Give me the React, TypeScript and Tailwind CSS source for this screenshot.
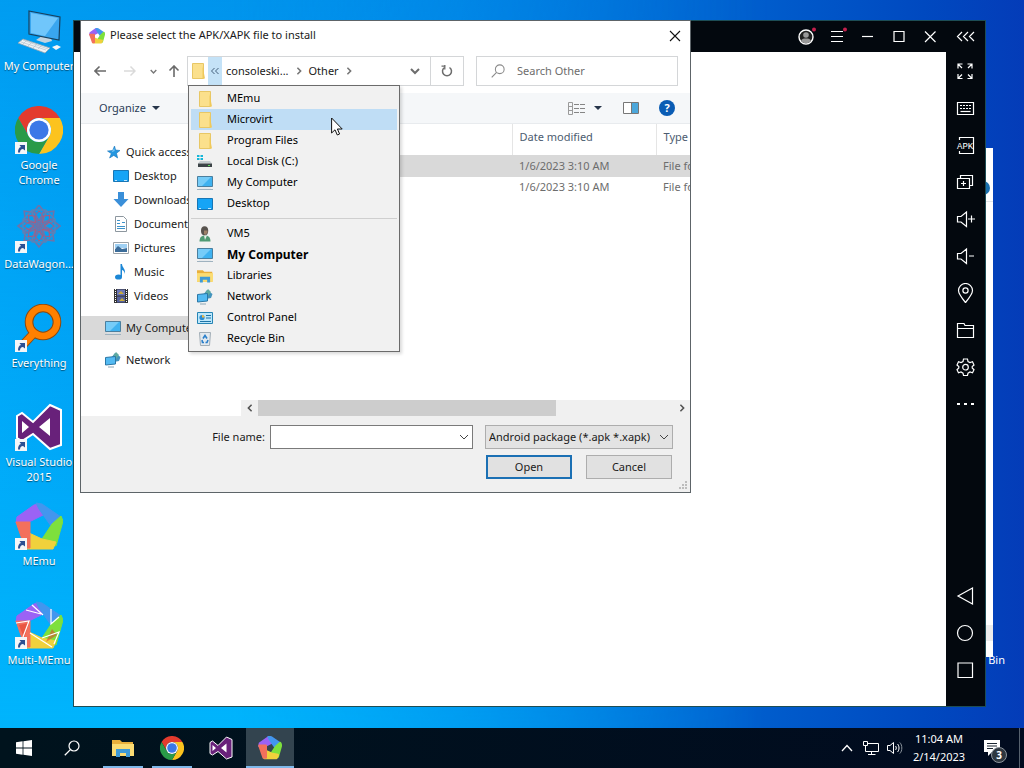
import type { ReactNode } from 'react';

/* ---------- icons ---------- */

const svgProps = { fill: 'none', xmlns: 'http://www.w3.org/2000/svg', 'aria-hidden': true } as const;

const memuBlades = [
  { d: 'M1 21 2 15 19 3 24 2 28 13 14 20Z', color: '#9b62f5' },
  { d: 'M21 1 27 2 46 15 36 24 24 7Z', color: '#4396ee' },
  { d: 'M46 14 48 19 41 44 27 37 37 22Z', color: '#7ee03c' },
  { d: 'M14 31 27 37 41 40 38 47 12 47Z', color: '#f0d13c' },
  { d: 'M1 20 15 20 15 46 10 46Z', color: '#f3705c' },
];

function MemuIcon({ className, multi = false, small = false }: { className: string; multi?: boolean; small?: boolean }) {
  return (
    <svg {...svgProps} viewBox={small ? '-2 -1 52 52' : '0 0 48 48'} className={className}>
      {memuBlades.map((b) => (
        <path key={b.color} d={b.d} fill={b.color} stroke={b.color} strokeWidth={small ? 5 : 1} strokeLinejoin="round" />
      ))}
      {multi && (
        <>
          <path d="M4 24 14 22 9 37ZM31 41 42 34 37 28Z" fill="#e0422c" fillOpacity=".55" />
          <path d="M17 4 28 14M11 9l15 4M36 8v15l8-7M1 22l13-2-6 16M15 32l22 14M27 37l17-6-5 12" stroke="#fff" strokeWidth="1.2" />
        </>
      )}
    </svg>
  );
}

function ChromeIcon({ className }: { className: string }) {
  return (
    <svg {...svgProps} viewBox="0 0 48 48" className={className}>
      <path d="M24 12H44.8A24 24 0 0 0 3.2 12L13.6 30A12 12 0 0 1 24 12Z" fill="#e33b2e" />
      <path d="M44.8 12H24A12 12 0 0 1 34.4 30L24 48A24 24 0 0 0 44.8 12Z" fill="#fcc31e" />
      <path d="M3.2 12 13.6 30A12 12 0 0 0 34.4 30L24 48A24 24 0 0 1 3.2 12Z" fill="#2a9a48" />
      <circle cx="24" cy="24" r="12" fill="#fff" />
      <circle cx="24" cy="24" r="9.6" fill="#3b78e7" />
    </svg>
  );
}

function VisualStudioIcon({ className }: { className: string }) {
  return (
    <svg {...svgProps} viewBox="0 0 48 48" className={className}>
      <path d="M35 2 46 7V42L35 46 18 31 7 38 2 35V13L7 10 18 19Z" fill="#68217a" stroke="#fff" strokeWidth="2" />
      <path d="M35 15 24 24 35 33ZM7 18V30L14 24Z" fill="#fff" />
    </svg>
  );
}

function EverythingIcon({ className }: { className: string }) {
  return (
    <svg {...svgProps} viewBox="0 0 48 48" className={className}>
      <path d="M19 29 6 43" stroke="#8a4a12" strokeWidth="9" />
      <circle cx="28" cy="18" r="14" stroke="#8a4a12" strokeWidth="8.6" />
      <circle cx="28" cy="18" r="14" stroke="#ff8000" strokeWidth="6.6" />
      <path d="M20 28 6 43" stroke="#ff8000" strokeWidth="7" />
    </svg>
  );
}

function DataWagonIcon({ className }: { className: string }) {
  return (
    <svg {...svgProps} viewBox="0 0 48 48" className={className}>
      {[0, 45, 90, 135, 180, 225, 270, 315].map((angle) => (
        <g key={angle} transform={`rotate(${angle} 24 21)`}>
          <path d="M24 21 17 9 24 0 31 9Z" stroke="#6f73a8" strokeWidth="1.6" />
          <path d="M24 15 18 5H30Z" stroke="#5a83b8" strokeWidth="1.4" />
          <path d="M24 16 20 11 24 6 28 11Z" stroke="#b0587c" strokeWidth="1" />
        </g>
      ))}
    </svg>
  );
}

function DesktopComputerIcon({ className }: { className: string }) {
  return (
    <svg {...svgProps} viewBox="0 0 48 48" className={className}>
      <path d="M27 29 36 31 37 34 30 36 21 33Z" fill="#c3d3df" />
      <path d="M14 4 45 10 44 33 14 27Z" fill="#39a6ef" stroke="#17415f" strokeWidth="1.2" />
      <path d="M16 6 43 11 30 29 16 26Z" fill="#70c6fb" />
      <path d="M3 36 8 32 35 41 30 46Z" fill="#edf2f5" stroke="#90a4b3" strokeWidth=".8" />
      <path d="M6 35 31 43M8 33l25 9M12 33l-4 4M17 35l-4 4M22 37l-4 4M27 38l-4 4" stroke="#adbcc7" strokeWidth=".6" />
      <path d="M37 40 42 38 46 40 41 43Z" fill="#f3f6f8" />
    </svg>
  );
}

function WindowsIcon() {
  return (
    <svg {...svgProps} viewBox="0 0 16 16" className="size-4">
      <path d="M0 2.2 6.6 1.3V7.6H0ZM7.4 1.2 16 0V7.6H7.4ZM0 8.4H6.6V14.7L0 13.8ZM7.4 8.4H16V16L7.4 14.8Z" fill="#fff" />
    </svg>
  );
}

function SearchIcon({ className }: { className: string }) {
  return (
    <svg {...svgProps} viewBox="0 0 16 16" className={className}>
      <circle cx="10" cy="6" r="5" stroke="currentColor" strokeWidth="1.2" />
      <path d="M6.4 9.6.8 15.2" stroke="currentColor" strokeWidth="1.3" />
    </svg>
  );
}

function LibrariesIcon({ className }: { className: string }) {
  return (
    <svg {...svgProps} viewBox="0 0 22 18" className={className}>
      <path d="M0 1H8L10 3H21V17H0Z" fill="#e9b03c" />
      <path d="M0 5H22V17H0Z" fill="#fbdc73" />
      <path d="M4 18V10H18V18H14V14H8V18Z" fill="#3f9ad6" />
    </svg>
  );
}

function Icon16({ children }: { children: ReactNode }) {
  return <svg {...svgProps} viewBox="0 0 16 16" className="size-4 shrink-0">{children}</svg>;
}

const FolderIcon = () => (
  <Icon16>
    <path d="M2.5.5H13.500V15.500H2.500Z" fill="#fbe08c" stroke="#e8c765" />
    <path d="M13.500 8 15 15.500H12.500V3Z" fill="#f0c95a" />
  </Icon16>
);

const MonitorIcon = () => (
  <Icon16>
    <path d="M.5 1.5H15.5V11.5H.5Z" fill="#3fb2f0" stroke="#4b7f9e" />
    <path d="M1 2H14L5 11H1Z" fill="#76ccf8" />
    <path d="M0 14.5H16" stroke="#9fb2bf" />
    <path d="M2 13H14" stroke="#dbe4ea" />
  </Icon16>
);

const DesktopIcon = () => (
  <Icon16>
    <path d="M.5 2.5H15.5V13.5H.5Z" fill="#16a4f6" stroke="#1876b5" />
    <path d="M2 12.5H4M11 12.5H14" stroke="#bde5ff" />
  </Icon16>
);

const NetworkIcon = () => (
  <Icon16>
    <path d="M10 1 15.500 5 14 9 9 10 6 6Z" fill="#4394bd" />
    <path d="M11 0 14 3 11 7 8 4Z" fill="#5fa9a0" />
    <path d="M.5 5.500 10.500 4.500V12L.5 13Z" fill="#53baf2" stroke="#2b77a6" />
    <path d="M3 15H9" stroke="#8ba6b6" />
  </Icon16>
);

const StarIcon = () => (
  <Icon16>
    <path d="M9.500 2 10.600 6 15 6.500 11.500 9.200 12.600 14 8.800 11.400 4.600 14 6.300 9.600 2.500 7 7.600 6.500Z" fill="#2497e0" stroke="#1876bd" strokeWidth=".6" />
    <path d="M9.300 4 9.700 7 6.500 8.300Z" fill="#77c5f5" />
  </Icon16>
);

const DownloadIcon = () => (
  <Icon16><path d="M5 0H11V7H15.500L8 15 .5 7H5Z" fill="#3a8fd9" /></Icon16>
);

const DocumentIcon = () => (
  <Icon16>
    <path d="M2.5.5H10.5L13.5 3.5V15.5H2.5Z" fill="#fff" stroke="#8d979f" />
    <path d="M4 4.5H7M4 7.5H7M9 6.5H12M4 10.5H12M4 12.5H12" stroke="#3f93ca" />
  </Icon16>
);

const PictureIcon = () => (
  <Icon16>
    <path d="M.5 2.5H15.5V13.5H.5Z" fill="#fff" stroke="#9ba3a9" />
    <path d="M2 4H14V8H2Z" fill="#9fd0f3" />
    <path d="M2 9 5 6 9 9 14 8V12H2Z" fill="#3b6c99" />
  </Icon16>
);

const MusicIcon = () => (
  <Icon16>
    <ellipse cx="5.5" cy="13" rx="3.5" ry="2.6" fill="#1c87d6" />
    <path d="M7.5 13V0H9C9 4 13.5 5 11.5 10 11.5 7 10 6 9 6V13Z" fill="#1c87d6" />
  </Icon16>
);

const VideoIcon = () => (
  <Icon16>
    <path d="M1 1H15V15H1Z" fill="#333" />
    <path d="M4 1.5H12V7.5H4Z" fill="#6a76b8" />
    <path d="M4 8.5H12V14.5H4Z" fill="#55619c" />
    <path d="M5 6 8 3 11 6ZM6 13 9 10 12 13Z" fill="#c8ab3c" />
    <path d="M2.5 1V15M13.5 1V15" stroke="#fff" strokeDasharray="1 1" />
  </Icon16>
);

const DiskIcon = () => (
  <Icon16>
    <path d="M0 1H2.5V3H0ZM3.5 1H6V3H3.5ZM0 4H2.5V6H0ZM3.5 4H6V6H3.5Z" fill="#16b6d8" />
    <path d="M3 7H13L15 9.5H1Z" fill="#c5cccf" />
    <path d="M1 9.5H15V13H1Z" fill="#3c4347" />
    <path d="M11 11.5H13" stroke="#5be05b" />
  </Icon16>
);

const UserIcon = () => (
  <Icon16>
    <path d="M2.500 15.500C2.500 11 5 9.500 8 9.500S13.500 11 13.500 15.500Z" fill="#4f9a73" />
    <path d="M7 9.5 8 14 10 9.5Z" fill="#e9efe9" />
    <ellipse cx="7.6" cy="4.8" rx="3.600" ry="4.500" fill="#58534e" />
    <path d="M7 4.5H10.5V6.5L8.5 9 7 8Z" fill="#9c8068" />
  </Icon16>
);

const ControlPanelIcon = () => (
  <Icon16>
    <path d="M.5 2.5H15.5V13.5H.5Z" fill="#bce7fb" stroke="#2685b5" />
    <circle cx="5" cy="7.5" r="2.6" fill="#2a8cd2" />
    <path d="M5 7.5V4.9A2.6 2.6 0 0 1 7.6 7.5Z" fill="#f4b942" />
    <path d="M9 5.5H14M9 8H14M3 11.5H14" stroke="#1e73a6" />
  </Icon16>
);

const RecycleIcon = () => (
  <Icon16>
    <path d="M2.5 1.5H13.5L12.5 14.5H3.5Z" fill="#e3e9ee" stroke="#a1adb6" />
    <path d="M6 7.500 8 4.500 10 7.500M11 9 10 11.500H8.500M7 11.500H5.500L5 9" stroke="#2a7fca" strokeWidth="1.6" />
  </Icon16>
);

function Chevron({ className }: { className: string }) {
  return (
    <svg {...svgProps} viewBox="0 0 10 10" className={className}>
      <path d="M1 3 5 7 9 3" stroke="currentColor" />
    </svg>
  );
}

function BoldChevron({ className }: { className: string }) {
  return (
    <svg {...svgProps} viewBox="0 0 10 10" className={className}>
      <path d="M1 3 5 7 9 3" stroke="currentColor" strokeWidth="2" />
    </svg>
  );
}

function Stroke({ children }: { children: ReactNode }) {
  return (
    <svg {...svgProps} viewBox="0 0 20 20" className="size-5" stroke="#fff" strokeWidth="1.2">
      {children}
    </svg>
  );
}

/* ---------- desktop ---------- */

const shortcuts = [
  { label: 'My Computer', icon: <DesktopComputerIcon className="size-12" />, arrow: false },
  { label: 'Google Chrome', icon: <ChromeIcon className="size-12" />, arrow: true },
  { label: 'DataWagon...', icon: <DataWagonIcon className="size-12" />, arrow: true },
  { label: 'Everything', icon: <EverythingIcon className="size-12" />, arrow: true },
  { label: 'Visual Studio 2015', icon: <VisualStudioIcon className="size-12" />, arrow: true },
  { label: 'MEmu', icon: <MemuIcon className="size-12" />, arrow: true },
  { label: 'Multi-MEmu', icon: <MemuIcon className="size-12" multi />, arrow: true },
];

function DesktopShortcuts() {
  return (
    <div className="flex w-[78px] flex-col pt-[7px]">
      {shortcuts.map((s) => (
        <button key={s.label} className="flex h-[99px] flex-col items-center gap-[3px] text-white">
          <span className="relative">
            {s.icon}
            {s.arrow && (
              <svg {...svgProps} viewBox="0 0 12 12" className="absolute bottom-0 left-0 size-3">
                <path d="M0 0H12V12H0Z" fill="#f4f6f8" />
                <path d="M3 10.5C3 7 4 5.5 6 5L4.5 3H10V8.5L8 7C6 7 5 8.5 5 10.5Z" fill="#2c4f92" />
              </svg>
            )}
          </span>
          <span className="leading-[15px] [text-shadow:0_1px_1px_rgba(0,0,0,0.5)]">{s.label}</span>
        </button>
      ))}
    </div>
  );
}

/* ---------- emulator window ---------- */

const titleButtons = [
  {
    name: 'Account',
    icon: (
      <>
        <circle cx="10" cy="10" r="7" fill="#222" strokeWidth="1.4" />
        <circle cx="10" cy="8" r="2.8" fill="#999" stroke="none" />
        <path d="M5 14C6 11.5 8 11.5 10 11.5S14 11.5 15 14A6.4 6.4 0 0 1 5 14Z" fill="#999" stroke="none" />
        <circle cx="18" cy="2.5" r="2" fill="#c4204c" stroke="none" />
      </>
    ),
  },
  {
    name: 'Menu',
    icon: (
      <>
        <path d="M4 4.5H16M4 9.5H16M4 14.5H16" />
        <circle cx="18" cy="2.5" r="2" fill="#c4204c" stroke="none" />
      </>
    ),
  },
  { name: 'Minimize', icon: <path d="M4 9.5H15" /> },
  { name: 'Maximize', icon: <path d="M5 4.5H15V14.5H5Z" /> },
  { name: 'Close', icon: <path d="M5 4.5 15.5 15M15.5 4.5 5 15" /> },
];

const sideTools = [
  { name: 'Full screen', icon: <path d="M3 7.5V3H7.5M3 3 7 7M12.5 3H17V7.5M17 3 13 7M3 13V17.5H7.5M3 17.5 7 13.5M17 13V17.5H12.5M17 17.5 13 13.5" /> },
  {
    name: 'Key mapping',
    icon: (
      <>
        <path d="M2.5 4.5H18.5V16.5H2.5Z" />
        <path d="M5 7.5H16.5M5 10.5H16.5" strokeDasharray="2 1" />
        <path d="M5.5 13.5H15.5" />
      </>
    ),
  },
  {
    name: 'Install APK',
    icon: (
      <>
        <path d="M4.5 5V2.5H18.5V18.5H4.5V16" />
        <text x="2" y="14" fill="#fff" stroke="none" className="font-['Liberation_Mono',monospace] text-[9px]">APK</text>
      </>
    ),
  },
  { name: 'Multi-instance', icon: <path d="M5.5 6V3.5H17.5V13.5H15M2.5 6.5H14.5V16.5H2.5ZM8.5 9V14M6 11.5H11" /> },
  { name: 'Volume up', icon: <path d="M2.5 7.5H6L11.5 3V17.5L6 13H2.5ZM13 10H20M16.5 6.5V13.5" /> },
  { name: 'Volume down', icon: <path d="M2.5 7.5H6L11.5 3V17.5L6 13H2.5ZM14 10H19" /> },
  {
    name: 'Location',
    icon: (
      <>
        <path d="M10.5 19.5C6 14 3.5 11 3.5 7.5A7 7 0 0 1 17.5 7.5C17.5 11 15 14 10.5 19.5Z" />
        <circle cx="10.5" cy="7.5" r="2.6" />
      </>
    ),
  },
  { name: 'Shared folder', icon: <path d="M2.5 17.5V3.5H9L10 5.5H18.5V17.5ZM2.5 8.5H18.5" /> },
  {
    name: 'Settings',
    icon: (
      <>
        <path d="M8.5 2H12.5L13 4.5 15 5.5 17.5 4.7 19 8 17.2 9.5V11L19 12.7 17.5 15.8 15 15 13 16.2 12.5 18.5H8.5L8 16.2 6 15 3.5 15.8 2 12.7 3.8 11V9.5L2 8 3.5 4.7 6 5.5 8 4.5Z" />
        <circle cx="10.5" cy="10.2" r="2.8" />
      </>
    ),
  },
  { name: 'More', icon: <path d="M2 10H5M9 10H12M16 10H19" strokeWidth="2" /> },
];

const navTools = [
  { name: 'Back', icon: <path d="M3 10 17.5 2V18Z" /> },
  { name: 'Home', icon: <circle cx="10" cy="10" r="7.5" /> },
  { name: 'Recents', icon: <path d="M3 3H17.5V17.5H3Z" /> },
];

function EmulatorWindow() {
  return (
    <section className="absolute top-5 right-[38px] bottom-[21px] left-[73px] flex border border-[#1d4d55] bg-white">
      <div className="flex flex-1 flex-col">
        <header className="flex h-[31px] justify-end bg-[#03080e] pr-px">
          {titleButtons.map((b) => (
            <button key={b.name} aria-label={b.name} className="flex w-[31px] items-center justify-center">
              <Stroke>{b.icon}</Stroke>
            </button>
          ))}
        </header>
      </div>
      <aside className="flex w-[39px] flex-col bg-[#03080e] pr-[2px]">
        <button aria-label="Collapse" className="flex h-[31px] items-center justify-center">
          <Stroke><path d="M7 5 2.5 9.5 7 14M13 5 8.5 9.5 13 14M19 5 14.5 9.5 19 14" /></Stroke>
        </button>
        {sideTools.map((t) => (
          <button key={t.name} aria-label={t.name} className="flex h-[37px] items-center justify-center">
            <Stroke>{t.icon}</Stroke>
          </button>
        ))}
        <div className="mt-auto flex flex-col pb-[18px]">
          {navTools.map((t) => (
            <button key={t.name} aria-label={t.name} className="flex h-[37px] items-center justify-center">
              <Stroke>{t.icon}</Stroke>
            </button>
          ))}
        </div>
      </aside>
    </section>
  );
}

/* ---------- file dialog ---------- */

type MenuEntry = { label: string; icon: ReactNode; active?: boolean; bold?: boolean };

const menuTop: MenuEntry[] = [
  { label: 'MEmu', icon: <FolderIcon /> },
  { label: 'Microvirt', icon: <FolderIcon />, active: true },
  { label: 'Program Files', icon: <FolderIcon /> },
  { label: 'Local Disk (C:)', icon: <DiskIcon /> },
  { label: 'My Computer', icon: <MonitorIcon /> },
  { label: 'Desktop', icon: <DesktopIcon /> },
];

const menuBottom: MenuEntry[] = [
  { label: 'VM5', icon: <UserIcon /> },
  { label: 'My Computer', icon: <MonitorIcon />, bold: true },
  { label: 'Libraries', icon: <LibrariesIcon className="h-[14px] w-4 shrink-0" /> },
  { label: 'Network', icon: <NetworkIcon /> },
  { label: 'Control Panel', icon: <ControlPanelIcon /> },
  { label: 'Recycle Bin', icon: <RecycleIcon /> },
];

function MenuRow({ item }: { item: MenuEntry }) {
  return (
    <button
      role="menuitem"
      className={`relative flex h-[21px] w-full items-center gap-[14px] pl-[6px] text-left text-black ${item.active ? 'bg-[#bfddf5]' : ''} ${item.bold ? 'text-[12px] font-bold' : ''}`}
    >
      {item.icon}
      <span>{item.label}</span>
      {item.active && (
        <svg {...svgProps} viewBox="0 0 12 19" className="absolute top-2 left-[140px] h-[19px] w-3">
          <path d="M.6 1V16L4 12.8 6.3 18 8.6 17 6.4 12H11.2Z" fill="#fff" stroke="#111" />
        </svg>
      )}
    </button>
  );
}

function BreadcrumbMenu() {
  return (
    <div role="menu" className="absolute top-7 left-0 z-10 w-[212px] border border-[#6b6b6b] bg-[#f1f1f1] p-[2px] shadow-[2px_2px_3px_rgba(0,0,0,0.15)]">
      {menuTop.map((item) => <MenuRow key={item.label} item={item} />)}
      <div className="flex h-[9px] items-center"><hr className="w-full border-[#cfcfcf]" /></div>
      {menuBottom.map((item) => <MenuRow key={item.label} item={item} />)}
    </div>
  );
}

const quickAccess = [
  { label: 'Desktop', icon: <DesktopIcon /> },
  { label: 'Downloads', icon: <DownloadIcon /> },
  { label: 'Documents', icon: <DocumentIcon /> },
  { label: 'Pictures', icon: <PictureIcon /> },
  { label: 'Music', icon: <MusicIcon /> },
  { label: 'Videos', icon: <VideoIcon /> },
];

function AddressBar() {
  return (
    <div className="flex h-[30px] pr-3">
      <div className="flex w-[106px] items-center pl-1">
        <button aria-label="Back" className="flex w-[30px] justify-center text-[#6a6a6a]">
          <svg {...svgProps} viewBox="0 0 12 12" className="size-3"><path d="M12 6H1M5.5 1.5 1 6l4.5 4.5" stroke="currentColor" strokeWidth="1.6" /></svg>
        </button>
        <button aria-label="Forward" className="flex w-[29px] justify-center text-[#dadada]">
          <svg {...svgProps} viewBox="0 0 12 12" className="size-3"><path d="M0 6H11M6.5 1.5 11 6l-4.5 4.5" stroke="currentColor" strokeWidth="1.5" /></svg>
        </button>
        <button aria-label="Recent locations" className="flex w-[18px] justify-center text-[#777]"><BoldChevron className="size-[7px]" /></button>
        <button aria-label="Up" className="flex w-6 justify-center text-[#6a6a6a]">
          <svg {...svgProps} viewBox="0 0 12 12" className="size-3"><path d="M6 12V1M1.5 5.5 6 1l4.5 4.5" stroke="currentColor" strokeWidth="1.6" /></svg>
        </button>
      </div>
      <div className="relative flex flex-1 items-center border border-[#d4d6d8]">
        <span className="flex w-5 justify-center"><FolderIcon /></span>
        <button aria-label="Show path" className="h-full w-[14px] bg-[#c4e2f7] text-[#44607c]">
          <svg {...svgProps} viewBox="0 0 10 8" className="mx-auto h-2 w-[10px]"><path d="M4.5 1 1.5 4 4.5 7M8.5 1 5.5 4 8.5 7" stroke="currentColor" /></svg>
        </button>
        <button className="pl-1">consoleski...</button>
        <span className="px-[6px] text-[#777]"><BoldChevron className="size-2 -rotate-90" /></span>
        <button>Other</button>
        <span className="px-[6px] text-[#777]"><BoldChevron className="size-2 -rotate-90" /></span>
        <button aria-label="Previous locations" className="ml-auto flex h-full w-[31px] items-center justify-center text-[#6d6d6d]"><BoldChevron className="size-[10px]" /></button>
        <button aria-label="Refresh" className="flex h-full w-[33px] items-center justify-center border-l border-[#d4d6d8] text-[#6d6d6d]">
          <svg {...svgProps} viewBox="0 0 12 12" className="size-3">
            <path d="M3.5 2.5A4.5 4.5 0 1 0 8.5 2.5" stroke="currentColor" strokeWidth="1.5" />
            <path d="M3.8 0V4.5M.5 1.2H4.5" stroke="currentColor" strokeWidth="1.3" />
          </svg>
        </button>
        <BreadcrumbMenu />
      </div>
      <label className="ml-3 flex w-[202px] items-center gap-3 border border-[#d4d6d8] pl-[14px] text-[#8a8a8a]">
        <SearchIcon className="size-[14px] shrink-0" />
        <input aria-label="Search Other" placeholder="Search Other" className="w-full min-w-0 bg-transparent outline-none placeholder:text-[#6d6d6d]" />
      </label>
    </div>
  );
}

function Toolbar() {
  return (
    <div className="mt-[7px] flex h-[31px] items-center border-b border-[#e8ebee] bg-[#f5f7f9] pr-[15px] pl-[18px] text-[#2b3c56]">
      <button className="flex items-center gap-[6px]">
        Organize
        <svg {...svgProps} viewBox="0 0 8 4" className="h-1 w-2"><path d="M0 0H8L4 4Z" fill="#26354a" /></svg>
      </button>
      <div className="ml-auto flex items-center">
        <button aria-label="Change your view" className="flex items-center gap-[9px]">
          <svg {...svgProps} viewBox="0 0 17 13" className="h-[13px] w-[17px]">
            <path d="M.5.5H4.5V12.5H.5ZM.5 4.5H4.5M.5 8.5H4.5" stroke="#9a9a9a" />
            <path d="M6 2.5H17M6 6.5H17M6 10.5H17" stroke="#858585" strokeDasharray="5 1" />
          </svg>
          <svg {...svgProps} viewBox="0 0 8 4" className="h-1 w-2"><path d="M0 0H8L4 4Z" fill="#26354a" /></svg>
        </button>
        <button aria-label="Preview pane" className="ml-[21px]">
          <svg {...svgProps} viewBox="0 0 16 12" className="h-3 w-4">
            <path d="M.5.5H15.5V11.5H.5Z" fill="#fff" stroke="#777" />
            <path d="M9 1H15V11H9Z" fill="#4ca7db" />
            <path d="M8.5 1V11" stroke="#777" />
          </svg>
        </button>
        <button aria-label="Help" className="ml-5 flex size-4 items-center justify-center rounded-full bg-[#0a5cb4] font-bold text-white">?</button>
      </div>
    </div>
  );
}

function FilePane() {
  return (
    <div className="ml-1 flex min-w-0 flex-1 flex-col overflow-hidden">
      <table className="w-full table-fixed text-left text-[#6d6d6d]">
        <thead>
          <tr className="h-[31px] text-[#4c5c70]">
            <th aria-label="Name" className="w-[271px] border-r border-[#e5e5e5]" />
            <th className="w-36 border-r border-[#e5e5e5] pb-1 pl-[7px] font-normal">Date modified</th>
            <th className="pb-1 pl-[7px] font-normal">Type</th>
          </tr>
        </thead>
        <tbody>
          {[0, 1].map((row) => (
            <tr key={row} className={row === 0 ? 'h-[22px] bg-[#d9d9d9]' : 'h-[21px]'}>
              <td />
              <td className="pl-[7px]">1/6/2023 3:10 AM</td>
              <td className="overflow-hidden pl-[7px] whitespace-nowrap">File folder</td>
            </tr>
          ))}
        </tbody>
      </table>
      <div className="mt-auto flex h-4 items-center bg-[#f0f0f0] text-[#555]">
        <button aria-label="Scroll left" className="flex w-[17px] justify-center"><BoldChevron className="size-2 rotate-90" /></button>
        <div className="h-full w-[298px] bg-[#cdcdcd]" />
        <button aria-label="Scroll right" className="ml-auto flex w-[17px] justify-center"><BoldChevron className="size-2 -rotate-90" /></button>
      </div>
    </div>
  );
}

function FileDialog() {
  return (
    <section role="dialog" aria-label="Please select the APK/XAPK file to install" className="absolute top-5 left-20 w-[611px] border border-[#5d6468] bg-white text-[#1a1a1a]">
      <header className="flex h-[35px] items-center pb-[6px] pl-2">
        <MemuIcon className="size-4" small />
        <h1 className="ml-[5px]">Please select the APK/XAPK file to install</h1>
        <button aria-label="Close" className="mr-[9px] ml-auto">
          <svg {...svgProps} viewBox="0 0 12 12" className="size-3"><path d="M1 1 11 11M11 1 1 11" stroke="#111" strokeWidth="1.1" /></svg>
        </button>
      </header>
      <AddressBar />
      <Toolbar />
      <div className="flex h-[292px]">
        <nav className="flex w-[156px] flex-col pt-4">
          <a href="#quick" className="flex h-6 items-center gap-[5px] pl-6"><StarIcon />Quick access</a>
          {quickAccess.map((q) => (
            <a key={q.label} href="#folder" className="flex h-6 items-center gap-[5px] pl-8">{q.icon}{q.label}</a>
          ))}
          <a href="#computer" className="mt-2 flex h-6 items-center gap-[5px] bg-[#d9d9d9] pl-6"><MonitorIcon />My Computer</a>
          <a href="#network" className="mt-2 flex h-6 items-center gap-[5px] pl-6"><NetworkIcon />Network</a>
        </nav>
        <FilePane />
      </div>
      <footer className="relative flex flex-col gap-[6px] bg-[#f0f0f0] pt-[9px] pr-[17px] pb-[13px]">
        <div className="flex items-center">
          <label htmlFor="file-name" className="w-[184px] text-right">File name:</label>
          <div className="relative ml-[5px] flex-1">
            <input id="file-name" className="block h-6 w-full border border-[#7a7a7a] bg-white px-1 outline-none" />
            <Chevron className="pointer-events-none absolute top-[7px] right-1 size-[10px] text-[#444]" />
          </div>
          <div className="relative ml-3 w-[188px]">
            <select aria-label="File type" className="block h-6 w-full appearance-none border border-[#adadad] bg-[#e3e3e3] pl-[3px]">
              <option>Android package (*.apk *.xapk)</option>
            </select>
            <Chevron className="pointer-events-none absolute top-[7px] right-1 size-[10px] text-[#444]" />
          </div>
        </div>
        <div className="flex justify-end gap-[14px] pr-px">
          <button className="h-6 w-[86px] border-2 border-[#1b70b4] bg-[#e1e1e1]">Open</button>
          <button className="h-6 w-[86px] border border-[#adadad] bg-[#e1e1e1]">Cancel</button>
        </div>
        <svg {...svgProps} viewBox="0 0 9 9" className="absolute right-[2px] bottom-[2px] size-[9px]">
          <path d="M6 0H8V2H6ZM3 3H5V5H3ZM6 3H8V5H6ZM0 6H2V8H0ZM3 6H5V8H3ZM6 6H8V8H6Z" fill="#bdbdbd" />
        </svg>
      </footer>
    </section>
  );
}

/* ---------- taskbar ---------- */

const pinned = [
  { name: 'File Explorer', icon: <LibrariesIcon className="h-[18px] w-[22px]" />, line: 'w-10' },
  { name: 'Google Chrome', icon: <ChromeIcon className="size-6" />, line: 'w-10' },
  { name: 'Visual Studio', icon: <VisualStudioIcon className="size-6" />, line: '' },
  { name: 'MEmu', icon: <MemuIcon className="size-6" small />, line: 'w-12', active: true },
];

function Taskbar() {
  return (
    <footer className="flex h-10 bg-linear-to-r from-[#00131d] to-[#010b1f] text-white">
      <button aria-label="Start" className="flex w-12 items-center justify-center"><WindowsIcon /></button>
      <button aria-label="Search" className="flex w-12 items-center justify-center"><SearchIcon className="size-4" /></button>
      <div className="ml-[3px] flex gap-px">
        {pinned.map((p) => (
          <button key={p.name} aria-label={p.name} className={`relative flex w-12 items-center justify-center ${p.active ? 'bg-[#33444f]' : ''}`}>
            {p.icon}
            {p.line && <span className={`absolute bottom-0 h-[2px] bg-[#7fb8ea] ${p.line}`} />}
          </button>
        ))}
      </div>
      <div className="ml-auto flex items-center">
        <button aria-label="Show hidden icons" className="flex w-6 justify-center">
          <svg {...svgProps} viewBox="0 0 12 8" className="h-2 w-3"><path d="M1 7 6 1.5 11 7" stroke="#fff" strokeWidth="1.3" /></svg>
        </button>
        <button aria-label="Network" className="flex w-6 justify-center">
          <svg {...svgProps} viewBox="0 0 16 14" className="h-[14px] w-4">
            <path d="M5 2.5H15.5V10.5H2.5V6M8.5 10.5V13.5M5 13.5H12.5M.5.5H4.5V4.5H.5ZM2.5 4.5V7" stroke="#fff" />
          </svg>
        </button>
        <button aria-label="Volume" className="flex w-6 justify-center">
          <svg {...svgProps} viewBox="0 0 16 14" className="h-[14px] w-4" stroke="#fff">
            <path d="M.5 4.5H3L6.5 1.5V12.5L3 9.5H.5ZM8.5 5C9.5 6 9.5 8 8.5 9M10.5 3C12.5 5 12.5 9 10.5 11" />
            <path d="M12.8 1.5C15.5 4 15.5 10 12.8 12.5" stroke="#8c949c" />
          </svg>
        </button>
        <button className="flex w-16 flex-col items-center text-center leading-[18px]">
          <span>11:04 AM</span>
          <span>2/14/2023</span>
        </button>
        <button aria-label="Notifications" className="relative flex h-10 w-[42px] items-center justify-center">
          <svg {...svgProps} viewBox="0 0 16 16" className="size-4">
            <path d="M0 0H16V12H8L4 16V12H0Z" fill="#fff" />
            <path d="M3 3.5H13M3 6H13M3 8.5H9" stroke="#1c2733" />
          </svg>
          <span className="absolute top-[19px] left-[20px] flex size-4 items-center justify-center rounded-full border border-[#8e959d] bg-[#2e3740] text-[10px] font-bold">3</span>
        </button>
        <div className="ml-[6px] h-10 w-[5px] border-l border-[#56616e]" />
      </div>
    </footer>
  );
}

export default function App() {
  return (
    <div className="flex h-screen flex-col overflow-hidden font-['Noto_Sans','Open_Sans',sans-serif] text-[11px]">
      <main className="relative flex-1 bg-linear-to-r from-[#00a8f8] via-[#0080e4] via-45% to-[#043cb8]">
        <div className="absolute inset-y-0 left-0 w-3/4 bg-linear-to-b from-[#0095ec]/60 via-[#00a8f8]/30 to-[#00b4fc] [mask-image:linear-gradient(to_right,black_30%,transparent)]" />
        <div className="relative"><DesktopShortcuts /></div>
        <span className="absolute top-[652px] right-[19px] leading-[15px] text-white">Bin</span>
        {/* window behind the emulator */}
        <div className="absolute top-[148px] right-[31px] h-[509px] w-40 bg-white">
          <span className="absolute top-[33px] right-[3px] size-[14px] rounded-full bg-[#1a6fae]" />
          <span className="absolute inset-x-0 top-[53px] h-px bg-[#e2e5e8]" />
          <span className="absolute inset-x-0 bottom-4 h-4 bg-[#ececec]" />
        </div>
        <EmulatorWindow />
        <FileDialog />
      </main>
      <Taskbar />
    </div>
  );
}
